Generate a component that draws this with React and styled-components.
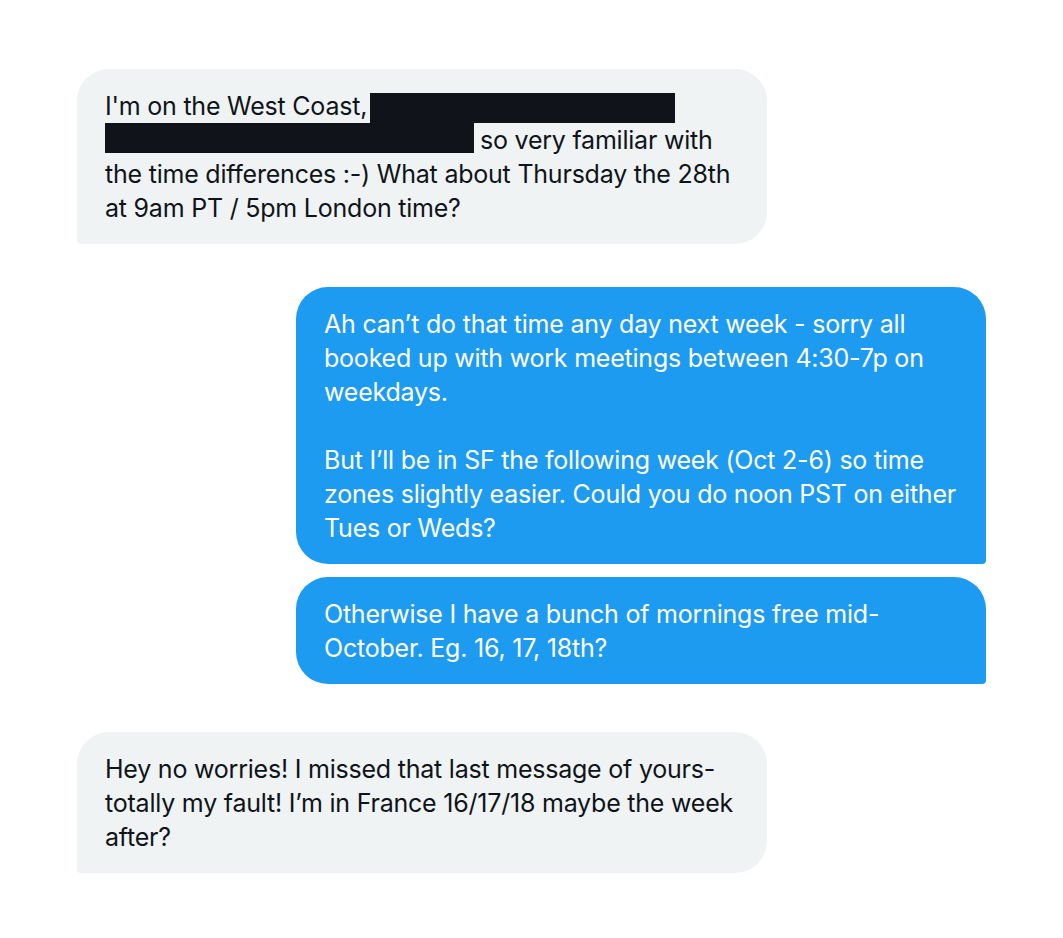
import React from "react";
import styled, { createGlobalStyle } from "styled-components";

const Global = createGlobalStyle`
  html, body { margin: 0; padding: 0; background: #ffffff; }
  body { font-family: Inter, "Liberation Sans", Arial, sans-serif; }
`;

const Page = styled.div`
  width: 1063px;
  min-height: 938px;
  background: #ffffff;
  padding: 69px 0 0 77px;
  box-sizing: border-box;
`;

const Thread = styled.div`
  width: 909px;
  display: flex;
  flex-direction: column;
`;

const Bubble = styled.div`
  box-sizing: border-box;
  width: 690px;
  padding: 20px 28px 19px;
  font-size: 25px;
  line-height: 34px;
  letter-spacing: -0.22px;
  align-self: ${(p) => (p.$mine ? "flex-end" : "flex-start")};
  background: ${(p) => (p.$mine ? "#1d9bf0" : "#eff3f4")};
  color: ${(p) => (p.$mine ? "#ffffff" : "#0f1419")};
  border-radius: ${(p) => (p.$mine ? "32px 32px 4px 32px" : "32px 32px 32px 4px")};
  margin-top: ${(p) => p.$gap || 0}px;
`;

const Line = styled.div`
  white-space: nowrap;
  min-height: 34px;
`;

const Redact = styled.span`
  display: inline-block;
  vertical-align: top;
  background: #10131a;
  height: 30px;
  margin-top: ${(p) => p.$top || 0}px;
  width: ${(p) => p.$w}px;
  margin-left: ${(p) => p.$ml || 0}px;
  margin-right: ${(p) => p.$mr || 0}px;
`;

export default function App() {
  return (
    <>
      <Global />
      <Page>
        <Thread>
          <Bubble>
            <Line>
              I'm on the West Coast,<Redact $w={305} $ml={3} $top={4} />
            </Line>
            <Line>
              <Redact $w={369} $mr={6} $top={0} />so very familiar with
            </Line>
            <Line>the time differences :-) What about Thursday the 28th</Line>
            <Line>at 9am PT / 5pm London time?</Line>
          </Bubble>
          <Bubble $mine $gap={43}>
            <Line>Ah can’t do that time any day next week - sorry all</Line>
            <Line>booked up with work meetings between 4:30-7p on</Line>
            <Line>weekdays.</Line>
            <Line />
            <Line>But I’ll be in SF the following week (Oct 2-6) so time</Line>
            <Line>zones slightly easier. Could you do noon PST on either</Line>
            <Line>Tues or Weds?</Line>
          </Bubble>
          <Bubble $mine $gap={13}>
            <Line>Otherwise I have a bunch of mornings free mid-</Line>
            <Line>October. Eg. 16, 17, 18th?</Line>
          </Bubble>
          <Bubble $gap={48}>
            <Line>Hey no worries! I missed that last message of yours-</Line>
            <Line>totally my fault! I’m in France 16/17/18 maybe the week</Line>
            <Line>after?</Line>
          </Bubble>
        </Thread>
      </Page>
    </>
  );
}
